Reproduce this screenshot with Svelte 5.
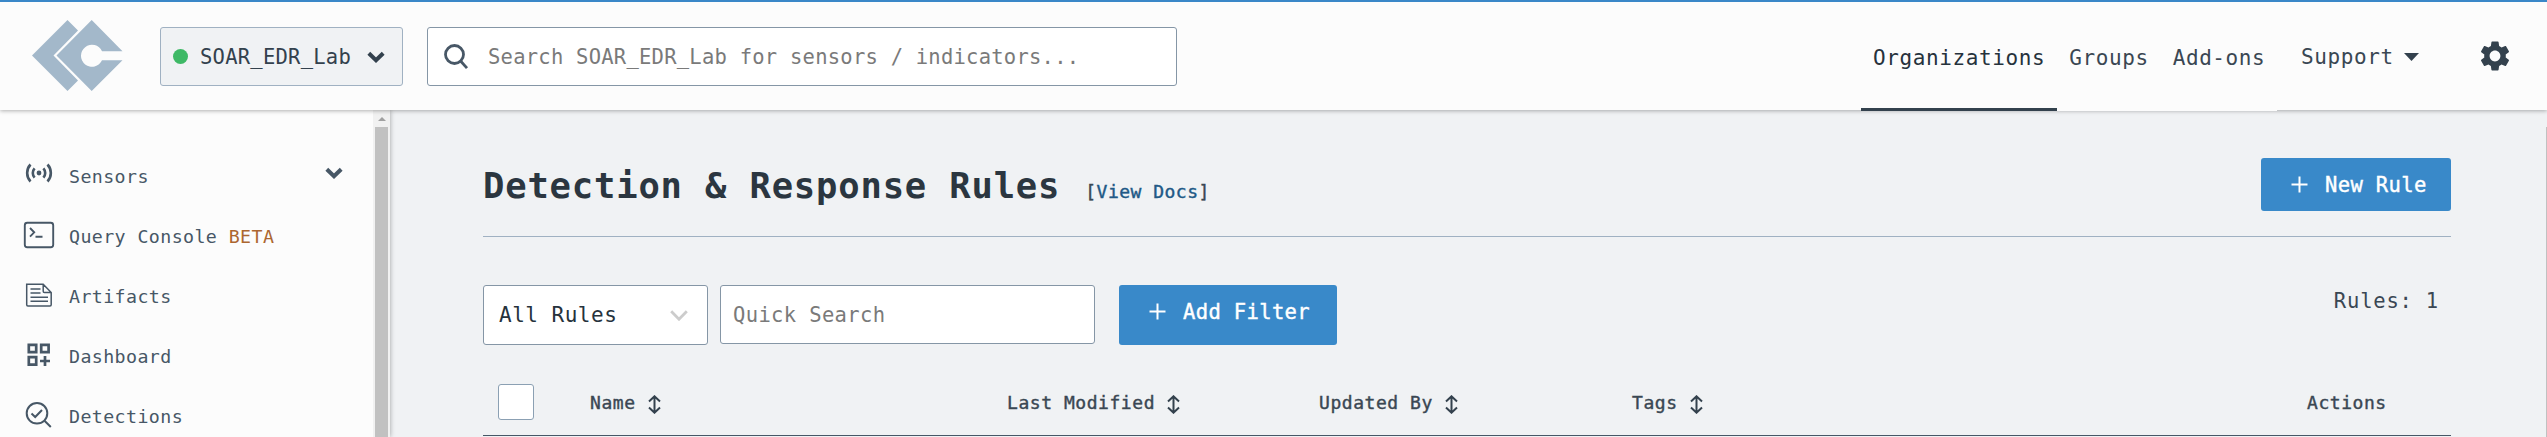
<script>
  const links = [
    { label: 'Organizations', active: true },
    { label: 'Groups', active: false },
    { label: 'Add-ons', active: false }
  ];
  const menu = [
    { label: 'Sensors', icon: 'sensors', expandable: true },
    { label: 'Query Console', icon: 'console', badge: 'BETA' },
    { label: 'Artifacts', icon: 'artifacts' },
    { label: 'Dashboard', icon: 'dashboard' },
    { label: 'Detections', icon: 'detections' }
  ];
  const columns = ['Name', 'Last Modified', 'Updated By', 'Tags'];
</script>

{#snippet plus()}
  <svg class="plus" width="17" height="17" viewBox="0 0 17 17"><path d="M8.5 0.5v16M0.5 8.5h16" stroke="currentColor" stroke-width="2" fill="none" /></svg>
{/snippet}

{#snippet chevron()}
  <svg width="18" height="12" viewBox="0 0 18 12"><path d="M1.8 2.2 9 9.2l7.2-7" stroke="currentColor" stroke-width="4" fill="none" /></svg>
{/snippet}

<div class="app">
  <header>
    <svg class="logo" width="91" height="71" viewBox="0 0 91 71">
      <path d="M35.5 0 46 10.5 21.5 35.5 46 60.5 35.5 71 0 35.5Z" />
      <path d="M59.7 0 90.5 31.3H70A11 11 0 1 0 70 40.300H90.500L59.700 71 24.500 35.500Z" />
    </svg>
    <button class="org">
      <span class="dot"></span>
      <span class="t">SOAR_EDR_Lab</span>
      {@render chevron()}
    </button>
    <div class="search">
      <svg width="25" height="26" viewBox="0 0 25 26"><circle cx="10.5" cy="10.5" r="9" /><path d="m16.8 17.3 6.2 6.800" /></svg>
      <span class="t">Search SOAR_EDR_Lab for sensors / indicators...</span>
    </div>
    <nav>
      {#each links as link}
        <a class:active={link.active}>{link.label}</a>
      {/each}
    </nav>
    <div class="support">
      <span>Support</span>
      <svg width="15" height="9" viewBox="0 0 15 9"><path d="M0 0h15L7.5 8Z" fill="#33414d" /></svg>
    </div>
    <svg class="gear" width="36" height="36" viewBox="0 0 24 24"><path d="M19.140 12.940c.04-.3.060-.61.060-.94 0-.32-.02-.64-.07-.94l2.030-1.580c.18-.14.230-.41.120-.61l-1.920-3.320c-.12-.22-.37-.29-.59-.22l-2.390.96c-.5-.38-1.030-.7-1.620-.94l-.36-2.540c-.04-.24-.24-.41-.48-.41h-3.840c-.24 0-.43.170-.47.410l-.36 2.540c-.59.240-1.130.570-1.620.940l-2.390-.96c-.22-.08-.47 0-.59.220L2.740 8.870c-.12.210-.08.470.120.610l2.030 1.580c-.05.3-.09.630-.09.940s.02.640.070.940l-2.030 1.580c-.18.140-.23.410-.12.610l1.920 3.320c.12.220.370.290.590.220l2.390-.96c.5.380 1.030.7 1.620.940l.36 2.540c.05.240.240.410.480.410h3.840c.24 0 .44-.17.470-.41l.36-2.540c.59-.24 1.130-.56 1.620-.94l2.390.96c.22.080.470 0 .59-.22l1.920-3.320c.12-.22.070-.47-.12-.61l-2.010-1.580zM12 15.600c-1.980 0-3.600-1.620-3.600-3.600s1.620-3.600 3.600-3.600 3.600 1.620 3.600 3.600-1.620 3.600-3.600 3.600z" /></svg>
  </header>

  <div class="body">
    <aside>
      <ul>
        {#each menu as item}
          <li>
            <span class="ico">
              <svg width="32" height="32" viewBox="0 0 32 32">
                {#if item.icon === 'sensors'}
                  <circle cx="16" cy="14" r="2.400" fill="currentColor" stroke="none" />
                  <path stroke-width="2.600" d="M11.600 9.300a7 7 0 0 0 0 9.400M20.400 9.300a7 7 0 0 1 0 9.400M7.500 5.500a12.500 12.500 0 0 0 0 17M24.500 5.500a12.500 12.500 0 0 1 0 17" />
                {:else if item.icon === 'console'}
                  <rect x="1.800" y="3.700" width="28.400" height="24.600" rx="2.500" stroke-width="1.900" />
                  <path stroke-width="1.900" d="m7 9 4.200 4.300L7 17.600M12.500 17.800h7" />
                {:else if item.icon === 'artifacts'}
                  <path stroke-width="1.500" d="M3.700 5.200h16.500l8 8.300v12.300q0 1.200-1.200 1.200H4.900q-1.200 0-1.200-1.200ZM20.200 5.200v7q0 1.300 1.300 1.300h6.700M7.500 10h10M7.500 14h10M7.500 18.200h17.500M7.500 22.300h17.500" />
                {:else if item.icon === 'dashboard'}
                  <path stroke-width="2.700" d="M5.800 5.800h7.400v7.400H5.800ZM18.200 5.800h7.400v7.400h-7.400ZM5.800 18.200h7.400v7.400H5.800ZM22 17v10M17 22h10" />
                {:else}
                  <g stroke-width="2">
                    <circle cx="14" cy="14.300" r="10.300" />
                    <path d="m21.500 21.800 6.300 6.200M8.500 14.500l3.700 3.500 6.800-7" />
                  </g>
                {/if}
              </svg>
            </span>
            <span class="label">{item.label}{#if item.badge}&nbsp;<em>{item.badge}</em>{/if}</span>
            {#if item.expandable}<span class="chev">{@render chevron()}</span>{/if}
          </li>
        {/each}
      </ul>
      <div class="track">
        <svg width="8" height="4" viewBox="0 0 8 4"><path d="M4 0 8 4H0Z" fill="#a0a0a0" /></svg>
        <div class="thumb"></div>
      </div>
    </aside>

    <main>
      <div class="title">
        <h1>Detection &amp; Response Rules</h1>
        <span class="docs">[<a>View Docs</a>]</span>
        <button class="primary">{@render plus()}<span>New Rule</span></button>
      </div>
      <div class="filters">
        <div class="select">
          <span>All Rules</span>
          <svg width="18" height="11" viewBox="0 0 18 11"><path d="m1.200 1.200 7.800 8 7.800-8" stroke="#ccc" stroke-width="2.800" fill="none" /></svg>
        </div>
        <div class="quick">Quick Search</div>
        <button class="primary add">{@render plus()}<span>Add Filter</span></button>
        <span class="count">Rules: 1</span>
      </div>
      <div class="thead">
        <span class="check"></span>
        {#each columns as c}
          <span class="th">{c}<svg width="13" height="19" viewBox="0 0 13 19"><path d="M6.500 1.500v16M1 6.500l5.500-5.200L12 6.500M1 12.500l5.500 5.200 5.500-5.200" stroke="currentColor" stroke-width="2" fill="none" /></svg></span>
        {/each}
        <span class="th">Actions</span>
      </div>
    </main>
    <div class="edge"></div>
  </div>
</div>

<style>
  :global(body) { background: #f0f2f4; }
  .app {
    box-sizing: border-box; width: 2547px; height: 437px; overflow: hidden;
    display: flex; flex-direction: column;
    font-family: 'DejaVu Sans Mono', monospace; color: #3a4753;
    font-size: 20.500px; letter-spacing: .24px; line-height: 28px; white-space: nowrap;
  }
  .app * { box-sizing: border-box; }
  button { font: inherit; letter-spacing: inherit; color: inherit; padding: 0; margin: 0; border: 0; }
  header {
    height: 110px; flex: none; display: flex; align-items: flex-start;
    border-top: 2px solid #3a87c8; background: #fcfcfc; padding-left: 32px;
    box-shadow: 0 1px 4px rgba(0, 0, 0, .3); position: relative; z-index: 2;
  }
  .logo { margin-top: 17.500px; fill: #a3b8ca; }
  .org {
    margin: 25px 0 0 37px; width: 243px; height: 59px; border: 1px solid #a0b1c2; border-radius: 3px;
    background: #f0f2f4; display: flex; align-items: center; padding: 0 17px 0 12px; color: #33414d;
  }
  .dot { width: 15px; height: 15px; border-radius: 50%; background: #3eb966; margin-right: 12px; }
  .org svg { margin-left: auto; }
  .search {
    margin: 25px 0 0 24px; width: 750px; height: 59px; border: 1px solid #8596a6; border-radius: 3px;
    background: #fff; display: flex; align-items: center; padding-left: 16px; color: #7a7a7a;
  }
  .search svg { fill: none; stroke: #475766; stroke-width: 2.800; margin-right: 19px; }
  nav { display: flex; margin-left: 684px; height: 109px; background: #fcfcfc; width: 416px; font-size: 21px; letter-spacing: .6px; }
  nav a { padding: 42px 12px 0; }
  nav a.active { border-bottom: 3px solid #33414d; color: #26323c; }
  .support { display: flex; font-size: 21px; letter-spacing: .6px; margin: 41px 0 0 24px; }
  .support svg { margin: 10px 0 0 10px; }
  .gear { fill: #33414d; margin: 36px 0 0 58px; }
  .body { flex: 1; display: flex; min-height: 0; }
  aside { width: 390px; flex: none; display: flex; background: #fcfcfc; box-shadow: 0 0 5px rgba(0, 0, 0, .35); }
  ul { list-style: none; margin: 0; padding: 36px 0 0; width: 373px; }
  li { height: 60px; display: flex; align-items: center; padding-left: 23px; color: #475766; font-size: 18.300px; letter-spacing: .4px; }
  .ico { height: 34px; }
  .ico svg { display: block; fill: none; stroke: currentColor; }
  .label { margin: 2px 0 0 14px; }
  em { font-style: normal; color: #ac6630; }
  .chev { margin: 0 30px 0 auto; line-height: 0; padding-bottom: 6px; }
  .track { width: 17px; background: #f1f1f1; padding: 7px 2px 0; display: flex; flex-direction: column; align-items: center; }
  .track svg { flex: none; }
  .thumb { width: 13px; flex: 1; background: #c1c1c1; margin-top: 6px; }
  main { flex: 1; padding: 48px 95px 0 93px; }
  .edge { width: 1px; margin-top: 17px; background: #c1c1c1; }
  .title { display: flex; height: 79px; border-bottom: 1px solid #a0b1c2; }
  h1 { margin: 4px 0 0; font-size: 35.500px; letter-spacing: .83px; line-height: 48px; color: #2b3640; font-weight: 700; }
  .docs { margin: 20px 0 0 25px; font-size: 18px; letter-spacing: .48px; -webkit-text-stroke: .4px; }
  .docs a { color: #215986; }
  .primary { background: #3989c9; color: #fff; border-radius: 3px; display: flex; align-items: center; -webkit-text-stroke: .4px; letter-spacing: .36px; }
  .title .primary { margin-left: auto; width: 190px; height: 53px; padding-left: 30px; }
  .plus { margin-right: 17px; }
  .filters { display: flex; padding-top: 48px; height: 138px; }
  .select, .quick { background: #fff; border: 1px solid #8596a6; border-radius: 3px; height: 60px; }
  .select { width: 225px; display: flex; align-items: center; padding: 0 19px 0 15px; font-size: 21px; letter-spacing: .5px; justify-content: space-between; color: #26323c; }
  .quick { width: 375px; height: 59px; margin-left: 12px; padding: 15px 12px 0; color: #7a7a7a; letter-spacing: .36px; }
  .add { margin-left: 24px; width: 218px; height: 60px; padding: 0 0 7px 30px; }
  .count { margin: 2px 12px 0 auto; letter-spacing: .8px; }
  .thead { display: grid; grid-template-columns: 107px 417px 312px 313px 675px 1fr; height: 61px; padding-top: 9px; border-bottom: 1px solid #475766; font-size: 18px; letter-spacing: .55px; -webkit-text-stroke: .4px; }
  .check { width: 36px; height: 36px; margin-left: 15px; background: #fff; border: 1px solid #8ba0b3; border-radius: 3px; }
  .th { padding-top: 5px; display: flex; }
  .th svg { margin: 6px 0 0 12px; color: #33414d; }
</style>
